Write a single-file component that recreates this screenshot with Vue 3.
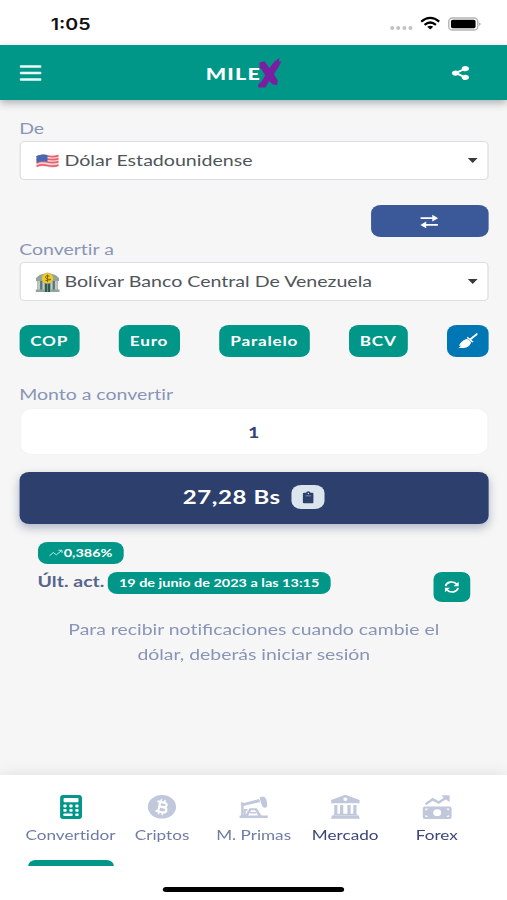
<script setup>
import { ref } from 'vue'

const amount = ref('1')
const shortcuts = ['COP', 'Euro', 'Paralelo', 'BCV']
const tabs = [
  { id: 'calc', label: 'Convertidor', active: true },
  { id: 'btc', label: 'Criptos' },
  { id: 'oil', label: 'M. Primas' },
  { id: 'bank', label: 'Mercado', dark: true },
  { id: 'forex', label: 'Forex', dark: true },
]
</script>

<template>
  <div class="viewport">
    <div class="screen">
      <div class="status">
        <span class="time">1:05</span>
        <svg class="status-icons" viewBox="0 0 94 16" preserveAspectRatio="none">
          <g fill="#c2c2c2">
            <circle cx="4" cy="12" r="2" /><circle cx="10" cy="12" r="2" />
            <circle cx="16.2" cy="12" r="2" /><circle cx="22.2" cy="12" r="2" />
          </g>
          <g fill="none" stroke="#000" stroke-width="2.2">
            <path d="M33 5.6Q42-1.8 51 5.6" />
            <path d="M36.3 8.8Q42 4.2 47.7 8.8" />
          </g>
          <path d="M39 10.8Q42 8.8 45 10.8L42 13.6Z" fill="#000" />
          <rect x="60.5" y="2" width="29" height="12" rx="3.6" fill="#fff" stroke="#b5b5b5" stroke-width="1.4" />
          <rect x="62.7" y="3.8" width="24.6" height="8.4" rx="1.8" fill="#000" />
          <path d="M91 6.2Q93.6 8 91 9.8Z" fill="#999" />
        </svg>
      </div>

      <header class="topbar">
        <svg class="menu" viewBox="0 0 22 18" preserveAspectRatio="none">
          <path d="M1.3 2.4H20.7M1.3 9H20.7M1.3 15.6H20.7" stroke="#e9fffb" stroke-width="2.5" stroke-linecap="round" />
        </svg>
        <div class="brand">
          <span>MILE</span>
          <svg class="brand-x" viewBox="0 0 26 32" preserveAspectRatio="none">
            <path d="M2.500 5.500L7.500 4.300L10.500 8L12.500 11L18 4.500L23 1L22.500 4.500L25 4.500L22.500 9.500L17.500 17L21.500 24L20.500 28L16 27.500L12.500 24L8.500 30.500L1 30.500L1.200 27L4.500 24.500L8.300 18.500L4.300 12L2.500 11Z" fill="#7b1fa2" />
          </svg>
        </div>
        <svg class="share" viewBox="0 0 448 512" preserveAspectRatio="none">
          <path fill="#fff" d="M352 320c-22.6 0-43.4 7.800-59.800 20.900l-102.500-64a96.600 96.600 0 0 0 0-41.700l102.500-64C308.600 184.200 329.400 192 352 192c53 0 96-43 96-96S405 0 352 0s-96 43-96 96c0 7.200.8 14.100 2.300 20.800L155.800 180.900C139.400 167.800 118.600 160 96 160c-53 0-96 43-96 96s43 96 96 96c22.600 0 43.400-7.800 59.800-20.900l102.500 64A96.300 96.300 0 0 0 256 416c0 53 43 96 96 96s96-43 96-96-43-96-96-96z" />
        </svg>
      </header>

      <main class="content">
        <label class="label">De</label>
        <div class="select">
          <svg class="emoji" viewBox="0 0 24 20" preserveAspectRatio="none">
            <path d="M1 5Q6 2.500 12 4T23 3.600V15.600Q18 17.600 12 16T1 16.500Z" fill="#f4d6da" />
            <path d="M1 6Q6 3.500 12 5T23 4.600M1 9Q6 6.500 12 8T23 7.600M1 12Q6 9.500 12 11T23 10.600M1 15.300Q6 13 12 14.500T23 14.200" fill="none" stroke="#e8606b" stroke-width="1.8" />
            <path d="M1 5Q6 2.500 12 4V10.500Q6 9.500 1 11.600Z" fill="#4468b4" />
          </svg>
          <span class="select-text">Dólar Estadounidense</span>
          <i class="caret"></i>
        </div>

        <div class="swap-row">
          <button class="swap">
            <svg viewBox="0 0 18 16" preserveAspectRatio="none">
              <path d="M.5 4.400H13M5 11.600H17.500" stroke="#fff" stroke-width="1.900" />
              <path d="M12 .7L17.700 4.400L12 8.100ZM6 7.900L.3 11.600L6 15.300Z" fill="#fff" />
            </svg>
          </button>
        </div>

        <label class="label">Convertir a</label>
        <div class="select second">
          <svg class="emoji" viewBox="0 0 24 20" preserveAspectRatio="none">
            <path d="M.5 6L4 3L12 .5L20 3L23.500 6V9H.5Z" fill="#93a3a0" />
            <path d="M2 9H22V18H2Z" fill="#60736f" />
            <path d="M3.500 9V18M8 9V18M16 9V18M20.500 9V18" stroke="#bdcac6" stroke-width="2.200" />
            <path d="M0 17.500H24V20H0Z" fill="#95a39f" />
            <path d="M9.500 12H14.500V20H9.500Z" fill="#2e5b50" />
            <path d="M12 12V20" stroke="#80a397" stroke-width=".8" />
            <ellipse cx="12" cy="6.300" rx="5.700" ry="5.300" fill="#f0c929" />
            <path d="M14 4.200Q10 2.800 10 5.100T14 7.400T9.900 8.600M12 2.600V10" fill="none" stroke="#806812" stroke-width="1" />
          </svg>
          <span class="select-text">Bolívar Banco Central De Venezuela</span>
          <i class="caret"></i>
        </div>

        <div class="shortcuts">
          <button v-for="name in shortcuts" :key="name" class="chip" :class="name.toLowerCase()">{{ name }}</button>
          <button class="chip clean">
            <svg viewBox="0 0 20 16" preserveAspectRatio="none">
              <path d="M19 1L12.500 6.200" stroke="#fff" stroke-width="1.900" stroke-linecap="round" />
              <path d="M9.600 3.700L15.700 8.800L14.300 9.600L8.800 5Z" fill="#fff" />
              <path d="M7.700 6.200Q9 5.600 10.300 6.600L12.800 8.700Q13.500 9.800 11.900 11.900Q8.500 15.600 .5 15Q2.500 13.800 2.800 12.500L.8 12.800Q3.300 7.700 7.700 6.200Z" fill="#fff" />
            </svg>
          </button>
        </div>

        <label class="label amount-label">Monto a convertir</label>
        <input v-model="amount" class="amount" />

        <div class="result">
          <span class="result-text">27,28 Bs</span>
          <button class="copy">
            <svg viewBox="0 0 12 14" preserveAspectRatio="none">
              <path d="M1.700 2H3.700Q4 .3 6 .3T8.300 2H10.300Q11.700 2 11.700 3.400V11.800Q11.700 13.200 10.300 13.200H1.700Q.3 13.200 .3 11.800V3.400Q.3 2 1.700 2Z" fill="#2d3f6c" />
              <path d="M3.200 5.200H8.800" stroke="#8190ad" stroke-width="1" />
              <circle cx="6" cy="2.700" r=".7" fill="#dbe5ee" />
            </svg>
          </button>
        </div>

        <section class="update">
          <div class="pill trend">
            <svg viewBox="0 0 14 8" preserveAspectRatio="none">
              <path d="M.5 6.800L4.300 3.500L7.300 5.800L12.700 1.500M9.500 1.300H13V4" fill="none" stroke="#c9eee8" stroke-width=".95" />
            </svg>
            <span>0,386%</span>
          </div>
          <div class="update-row">
            <span class="update-label">Últ. act.</span>
            <span class="pill date">19 de junio de 2023 a las 13:15</span>
            <button class="refresh">
              <svg viewBox="0 0 14 13" preserveAspectRatio="none">
                <g fill="none" stroke="#fff" stroke-width="1.800">
                  <path d="M.9 5.600C1.800 1 8-.6 11.800 3.400" />
                  <path d="M13.100 7.400C12.200 12 6 13.600 2.200 9.600" />
                </g>
                <path d="M13.700 .8V5.600H8.700ZM.3 12.200V7.400H5.300Z" fill="#fff" />
              </svg>
            </button>
          </div>
          <p class="notice">Para recibir noti<span class="ligature">fi</span>caciones cuando cambie el<br />dólar, deberás iniciar sesión</p>
        </section>
      </main>

      <nav class="tabbar">
        <div class="tabs">
          <a v-for="tab in tabs" :key="tab.id" class="tab" :class="{ active: tab.active, dark: tab.dark }">
            <svg class="tab-icon" viewBox="0 0 32 26" preserveAspectRatio="none" fill="currentColor">
              <template v-if="tab.id === 'calc'">
                <rect x="5" y="1" width="22" height="24" rx="3" />
                <rect x="8.500" y="4" width="15" height="4.200" rx=".8" fill="#fff" />
                <g fill="#fff">
                  <rect x="8.300" y="10.600" width="3.300" height="2.800" rx=".8" />
                  <rect x="14.300" y="10.600" width="3.300" height="2.800" rx=".8" />
                  <rect x="20.300" y="10.600" width="3.300" height="2.800" rx=".8" />
                  <rect x="8.300" y="15" width="3.300" height="2.800" rx=".8" />
                  <rect x="14.300" y="15" width="3.300" height="2.800" rx=".8" />
                  <rect x="20.300" y="15" width="3.300" height="2.800" rx=".8" />
                  <rect x="8.300" y="19.500" width="9.300" height="2.600" rx=".8" />
                  <rect x="20.300" y="19.500" width="3.300" height="2.600" rx=".8" />
                </g>
              </template>
              <template v-else-if="tab.id === 'btc'">
                <ellipse cx="16.300" cy="12.800" rx="14.200" ry="11.800" />
                <g transform="rotate(12 16 13)" fill="none" stroke="#fff">
                  <path d="M10.700 8.200H17.200C21.800 8.200 21.500 12.800 17.200 12.800H13.500M17.200 12.800C22.800 12.800 22.500 18 17.500 18H10.700M13.500 8.200V18" stroke-width="2.200" />
                  <path d="M14.300 5.300V8M18 5.300V8M14.300 18V20.800M18 18V20.800" stroke-width="1.500" />
                </g>
              </template>
              <template v-else-if="tab.id === 'oil'">
                <path d="M2 21.500H30.300V24H2Z" />
                <path d="M3.600 8.300H6V22H3.600Z" />
                <path d="M3.600 9.800L21.500 5L23 8L4.500 12.300Z" />
                <path d="M22 3.500Q23 2.300 26.500 2.800Q29.600 4 29.800 11.500Q29.500 14 27.300 13.800Q24.500 13.500 23.800 9.500Z" />
                <path d="M12 14.300H19.300L24.300 22H20.800L17.600 16.300H13.700L10.300 22H7.500Z" />
                <path d="M6 15H10V16.800H8.200V22H6ZM12.500 18H18.500V19.400H12.500Z" />
              </template>
              <template v-else-if="tab.id === 'bank'">
                <path fill-rule="evenodd" d="M16 .7L30.300 6V9.200H1.700V6ZM16 3.600A2 1.700 0 1 0 16 7A2 1.700 0 1 0 16 3.600Z" />
                <path d="M4.800 11H8V19.800H10.700V11H13.900V19.800H18.100V11H21.300V19.800H24V11H27.200V20L29 21.500H3L4.800 20Z" />
                <path d="M2.500 21.400H29.500L30.500 24.800H1.500Z" />
              </template>
              <template v-else>
                <path d="M4.300 10.200L11.500 5.300L17.500 8.600L25.300 3.500" fill="none" stroke="currentColor" stroke-width="2.500" />
                <path d="M20.200 1.200H28.500V8L26.200 6.500L22.500 4Z" />
                <path fill-rule="evenodd" d="M3.500 12.400H28.500Q30.500 12.400 30.500 14.300V23Q30.500 25 28.500 25H3.500Q1.500 25 1.500 23V14.300Q1.500 12.400 3.500 12.400ZM16 15.300A4 3.400 0 1 0 16 22.100A4 3.400 0 1 0 16 15.300Z" />
                <path d="M4 14.500H6.700Q6.300 16.300 4 16.500ZM28 14.500V16.500Q25.700 16.300 25.300 14.500ZM4 20.900Q6.300 21.100 6.700 23H4ZM28 20.900V23H25.300Q25.700 21.100 28 20.900Z" fill="#f5f6fa" />
              </template>
            </svg>
            <span class="tab-label">{{ tab.label }}</span>
            <i v-if="tab.active" class="indicator"></i>
          </a>
        </div>
        <div class="home-bar"></div>
      </nav>
    </div>
  </div>
</template>

<style>
body {
  margin: 0;
}
</style>

<style scoped>
.viewport {
  width: 507px;
  height: 900px;
  overflow: hidden;
}
/* The 414-unit-wide phone layout fills the full viewport width. */
.screen {
  width: 414px;
  height: 900px;
  transform: scaleX(1.22464);
  transform-origin: 0 0;
  display: flex;
  flex-direction: column;
  background: #f6f6f6;
  font-family: Lato, sans-serif;
  font-variant-ligatures: none;
  color: #2d3f6c;
}
.screen * {
  box-sizing: border-box;
}
.ligature {
  font-variant-ligatures: normal;
}
button {
  border: 0;
  padding: 0;
  font-family: inherit;
  display: flex;
  align-items: center;
  justify-content: center;
}
svg {
  display: block;
  flex: none;
}
.status {
  height: 45px;
  flex: none;
  background: #fff;
  display: flex;
  justify-content: space-between;
  align-items: center;
  padding: 2px 20px 0 41.500px;
}
.time {
  font: 600 16px/20px Inter, sans-serif;
  color: #111;
}
.status-icons {
  width: 76.8px;
  height: 16px;
}
.topbar {
  height: 55px;
  flex: none;
  background: #009688;
  display: flex;
  align-items: center;
  justify-content: space-between;
  padding: 0 31px 0 15.5px;
  box-shadow: 0 3px 7px rgba(60, 70, 80, 0.4);
}
.menu {
  width: 18px;
  height: 18px;
}
.brand {
  display: flex;
  align-items: center;
  color: #fff;
  font-size: 17.500px;
  font-weight: 900;
  letter-spacing: 1px;
  line-height: 20px;
  margin-left: -4px;
}
.brand span {
  padding-top: 3px;
}
.brand-x {
  width: 20.500px;
  height: 32px;
  margin-left: -3px;
}
.share {
  width: 14px;
  height: 14px;
}
.content {
  flex: 1;
  padding: 17px 15.200px 0 15.700px;
  display: flex;
  flex-direction: column;
}
.label {
  height: 22px;
  line-height: 22px;
  flex: none;
  font-size: 15.900px;
  color: #8995b6;
}
.select {
  height: 39px;
  flex: none;
  margin-top: 2px;
  border: 1px solid #d9dee0;
  border-radius: 4px;
  background: #fff;
  display: flex;
  align-items: center;
  padding: 0 8.300px 0 12.700px;
  color: #50555b;
  font-size: 16px;
}
.emoji {
  width: 19.600px;
  height: 20px;
  margin-right: 3.700px;
}
.select-text {
  flex: 1;
  white-space: nowrap;
  padding-bottom: 2px;
}
.caret {
  border: 4px solid transparent;
  border-top: 5px solid #343a40;
  border-bottom: 0;
}
.swap-row {
  display: flex;
  justify-content: flex-end;
  padding: 25px 0 1px;
}
.swap {
  width: 96px;
  height: 32px;
  border-radius: 8px;
  background: #3b5998;
}
.swap svg {
  width: 15px;
  height: 15px;
}
.shortcuts {
  display: flex;
  justify-content: space-between;
  padding-top: 24px;
}
.chip {
  height: 32px;
  border-radius: 8px;
  background: #009688;
  color: #fff;
  font-size: 14px;
  font-weight: 700;
  letter-spacing: 0.65px;
  padding-bottom: 1px;
}
.cop {
  width: 49px;
}
.euro {
  width: 50px;
}
.paralelo {
  width: 74px;
}
.bcv {
  width: 48px;
}
.clean {
  width: 34px;
  background: #0077b5;
}
.clean svg {
  width: 16.300px;
  height: 16px;
}
.amount-label {
  margin-top: 26px;
}
.amount {
  width: 100%;
  height: 47px;
  margin-top: 3px;
  padding: 0 0 1px;
  border: 1px solid #f1f3f5;
  border-radius: 10px;
  background: #fff;
  outline: 0;
  text-align: center;
  font: 700 16px Lato, sans-serif;
  color: #33436f;
}
.result {
  height: 52px;
  margin-top: 16.500px;
  flex: none;
  border-radius: 8px;
  background: #2d3f6c;
  box-shadow: 0 4px 9px rgba(45, 63, 108, 0.35);
  display: flex;
  align-items: center;
  justify-content: center;
  gap: 8.500px;
  color: #fff;
}
.result-text {
  font-size: 19.600px;
  font-weight: 700;
  letter-spacing: 0.5px;
  padding-bottom: 2px;
}
.copy {
  width: 27.500px;
  height: 24px;
  margin-bottom: 1px;
  border-radius: 8px;
  background: #dbe5ee;
}
.copy svg {
  width: 9.500px;
  height: 13px;
}
.update {
  padding: 18px 15px 0 15px;
}
.pill {
  height: 22px;
  border-radius: 8px;
  background: #009688;
  color: #fff;
  font-size: 11.800px;
  font-weight: 700;
  display: flex;
  align-items: center;
  justify-content: center;
  white-space: nowrap;
}
.trend {
  width: 70.500px;
}
.trend svg {
  width: 11.500px;
  height: 8px;
  margin-right: 0.500px;
}
.update-row {
  height: 30px;
  margin-top: 8px;
  display: flex;
  align-items: flex-start;
}
.update-label {
  width: 57.500px;
  font-size: 15.900px;
  font-weight: 700;
  line-height: 18px;
  color: #56658d;
  white-space: nowrap;
}
.date {
  width: 181.500px;
}
.refresh {
  width: 30px;
  height: 30px;
  margin-left: auto;
  border-radius: 7px;
  background: #009688;
}
.refresh svg {
  width: 11.800px;
  height: 12px;
}
.notice {
  margin: 14px -10px 0;
  text-align: center;
  font-size: 15.850px;
  line-height: 25px;
  color: #8995b6;
}
.tabbar {
  height: 125.500px;
  flex: none;
  background: #fff;
  box-shadow: 0 -2px 12px rgba(0, 0, 0, 0.08);
  display: flex;
  flex-direction: column;
  align-items: center;
}
.tabs {
  width: 100%;
  height: 91.500px;
  display: flex;
  padding: 0 20px 0 20.200px;
}
.tab {
  flex: 1;
  display: flex;
  flex-direction: column;
  align-items: center;
  color: #c2c8db;
  padding-top: 19px;
}
.tab-icon {
  width: 26px;
  height: 26px;
}
.tab-label {
  height: 20px;
  margin-top: 5px;
  line-height: 20px;
  font-size: 14px;
  color: #6f7ca3;
  white-space: nowrap;
}
.tab.dark .tab-label {
  color: #3d4578;
}
.tab.active {
  color: #009688;
}
.indicator {
  width: 70px;
  height: 6px;
  margin-top: auto;
  border-radius: 6px 6px 0 0;
  background: #009688;
}
.home-bar {
  width: 148px;
  height: 5px;
  margin-top: 20.500px;
  border-radius: 3px;
  background: #000;
}
</style>
